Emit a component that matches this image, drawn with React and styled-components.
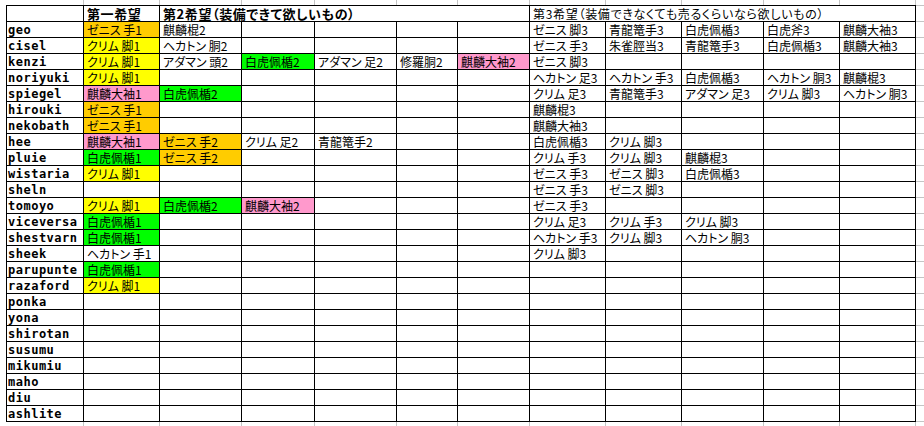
import React from 'react';
import styled, { createGlobalStyle } from 'styled-components';

const GlobalStyle = createGlobalStyle`
  html, body {
    margin: 0;
    padding: 0;
    background: #ffffff;
  }
`;

const FILLS = {
  o: '#ffcc00',
  y: '#ffff00',
  p: '#ff99cc',
  g: '#00ff00',
};

const GRID = '#c4c4c4';
const INK = '#000000';

const Sheet = styled.div`
  display: grid;
  grid-template-columns: 6px 78px 76px 82px 73px 82px 61px 72px 76px 76px 82px 76px 76px 8px;
  grid-template-rows: 5px 17px repeat(25, 16px) 4px;
  width: 924px;
  height: 426px;
  overflow: hidden;
  background: #ffffff;
`;

const Edge = styled.div``;

const Gutter = styled.div`
  box-sizing: border-box;
  border-right: 1px solid ${GRID};
`;

const Tail = styled.div`
  box-sizing: border-box;
  border-top: ${(p) => (p.$head ? `1px solid ${GRID}` : 'none')};
  border-bottom: ${(p) => (p.$blank ? 'none' : `1px solid ${GRID}`)};
`;

const Cell = styled.div`
  box-sizing: border-box;
  grid-column: span ${(p) => p.$span || 1};
  border-right: 1px solid ${INK};
  border-bottom: 1px solid ${INK};
  border-top: ${(p) => (p.$head ? `1px solid ${INK}` : 'none')};
  background: ${(p) => p.$fill || '#ffffff'};
  padding: 0 0 0 3px;
  display: flex;
  align-items: flex-end;
  overflow: hidden;
  white-space: nowrap;
  font-family: "Noto Sans CJK JP", "Noto Sans", sans-serif;
  font-feature-settings: "palt";
  font-size: ${(p) => (p.$bold ? '13px' : '12px')};
  font-weight: ${(p) => (p.$bold ? 700 : 400)};
  letter-spacing: ${(p) => p.$spread || (p.$bold ? '0.6px' : '0')};
  line-height: 14px;
  color: #000000;
`;

const NameCell = styled(Cell)`
  border-left: 1px solid ${INK};
  padding-left: 1px;
  font-family: "DejaVu Sans Mono", "Liberation Mono", monospace;
  font-size: 12px;
  font-weight: 700;
  letter-spacing: 0.5px;
`;

const ROWS = [
  ['geo', [['ゼニス 手1', 'o'], '麒麟棍2', null, null, null, null, 'ゼニス 脚3', '青龍篭手3', '白虎佩楯3', '白虎斧3', '麒麟大袖3']],
  ['cisel', [['クリム 脚1', 'y'], 'ヘカトン 胴2', null, null, null, null, 'ゼニス 手3', '朱雀脛当3', '青龍篭手3', '白虎佩楯3', '麒麟大袖3']],
  ['kenzi', [['クリム 脚1', 'y'], 'アダマン 頭2', ['白虎佩楯2', 'g'], 'アダマン 足2', '修羅胴2', ['麒麟大袖2', 'p'], 'ゼニス 脚3', null, null, null, null]],
  ['noriyuki', [['クリム 脚1', 'y'], null, null, null, null, null, 'ヘカトン 足3', 'ヘカトン 手3', '白虎佩楯3', 'ヘカトン 胴3', '麒麟棍3']],
  ['spiegel', [['麒麟大袖1', 'p'], ['白虎佩楯2', 'g'], null, null, null, null, 'クリム 足3', '青龍篭手3', 'アダマン 足3', 'クリム 脚3', 'ヘカトン 胴3']],
  ['hirouki', [['ゼニス 手1', 'o'], null, null, null, null, null, '麒麟棍3', null, null, null, null]],
  ['nekobath', [['ゼニス 手1', 'o'], null, null, null, null, null, '麒麟大袖3', null, null, null, null]],
  ['hee', [['麒麟大袖1', 'p'], ['ゼニス 手2', 'o'], 'クリム 足2', '青龍篭手2', null, null, '白虎佩楯3', 'クリム 脚3', null, null, null]],
  ['pluie', [['白虎佩楯1', 'g'], ['ゼニス 手2', 'o'], null, null, null, null, 'クリム 手3', 'クリム 脚3', '麒麟棍3', null, null]],
  ['wistaria', [['クリム 脚1', 'y'], null, null, null, null, null, 'ゼニス 手3', 'ゼニス 脚3', '白虎佩楯3', null, null]],
  ['sheln', [null, null, null, null, null, null, 'ゼニス 手3', 'ゼニス 脚3', null, null, null]],
  ['tomoyo', [['クリム 脚1', 'y'], ['白虎佩楯2', 'g'], ['麒麟大袖2', 'p'], null, null, null, 'ゼニス 手3', null, null, null, null]],
  ['viceversa', [['白虎佩楯1', 'g'], null, null, null, null, null, 'クリム 足3', 'クリム 手3', 'クリム 脚3', null, null]],
  ['shestvarn', [['白虎佩楯1', 'g'], null, null, null, null, null, 'ヘカトン 手3', 'クリム 脚3', 'ヘカトン 胴3', null, null]],
  ['sheek', ['ヘカトン 手1', null, null, null, null, null, 'クリム 脚3', null, null, null, null]],
  ['parupunte', [['白虎佩楯1', 'g']]],
  ['razaford', [['クリム 脚1', 'y']]],
  ['ponka', []],
  ['yona', []],
  ['shirotan', []],
  ['susumu', []],
  ['mikumiu', []],
  ['maho', []],
  ['diu', []],
  ['ashlite', []],
];

const DATA_COLS = 11;

function Strip({ id }) {
  return (
    <>
      <Edge />
      {Array.from({ length: 12 }, (_, i) => (
        <Gutter key={`${id}-${i}`} />
      ))}
      <Tail $blank />
    </>
  );
}

function Row({ name, values }) {
  return (
    <>
      <Edge />
      <NameCell>{name}</NameCell>
      {Array.from({ length: DATA_COLS }, (_, i) => {
        const v = values[i];
        if (!v) return <Cell key={i} />;
        if (Array.isArray(v)) return <Cell key={i} $fill={FILLS[v[1]]}>{v[0]}</Cell>;
        return <Cell key={i}>{v}</Cell>;
      })}
      <Tail />
    </>
  );
}

export default function App() {
  return (
    <>
      <GlobalStyle />
      <Sheet>
        <Strip id="top" />
        <Edge />
        <NameCell $head />
        <Cell $head $bold>第一希望</Cell>
        <Cell $head $bold $span={5}>第2希望（装備できて欲しいもの）</Cell>
        <Cell $head $span={5} $spread="0.7px">第3希望（装備できなくても売るくらいなら欲しいもの）</Cell>
        <Tail $head />
        {ROWS.map(([name, values]) => (
          <Row key={name} name={name} values={values} />
        ))}
        <Strip id="bottom" />
      </Sheet>
    </>
  );
}
